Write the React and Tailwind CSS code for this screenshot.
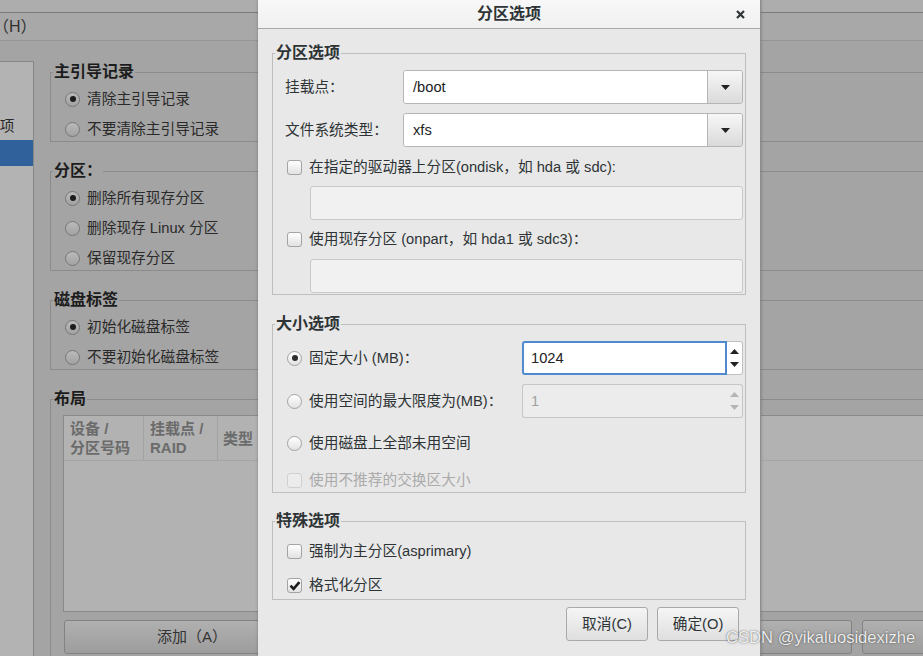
import React from "react";

const Radio = ({ checked, dim }) => (
  <span
    className={`flex h-[15px] w-[15px] shrink-0 items-center justify-center rounded-full border ${
      dim
        ? "border-[#777777] bg-linear-to-b from-[#bababa] to-[#a2a2a2]"
        : "border-[#a3a3a3] bg-linear-to-b from-white to-[#e2e2e2]"
    }`}
  >
    {checked && (
      <span className={`h-[6px] w-[6px] rounded-full ${dim ? "bg-[#1c1c1c]" : "bg-[#2e2e2e]"}`} />
    )}
  </span>
);

const Check = ({ checked, disabled }) => (
  <span
    className={`flex h-[15px] w-[15px] shrink-0 items-center justify-center rounded-[3px] border ${
      disabled
        ? "border-[#d0d0d0] bg-[#ececec]"
        : "border-[#a3a3a3] bg-linear-to-b from-white to-[#e2e2e2]"
    }`}
  >
    {checked && (
      <svg width="12" height="11" viewBox="0 0 12 11">
        <path d="M1.5 5.6 L4.6 8.8 L10.4 2.2" fill="none" stroke="#1a1a1a" strokeWidth="2.6" />
      </svg>
    )}
  </span>
);

const Arrow = ({ up, color = "#222" }) => (
  <svg width="9" height="5" viewBox="0 0 9 5">
    <path d={up ? "M0 5H9L4.5 0Z" : "M0 0H9L4.5 5Z"} fill={color} />
  </svg>
);

const Combo = ({ value }) => (
  <div className="flex h-[34px] w-[340px] overflow-hidden rounded-[3px] border border-[#b5b5b5]">
    <div className="flex flex-1 items-center bg-white pl-[9px] text-[#222]">{value}</div>
    <div className="flex w-[35px] items-center justify-center border-l border-[#b5b5b5] bg-linear-to-b from-[#f7f7f7] to-[#dadada]">
      <Arrow />
    </div>
  </div>
);

const Entry = () => (
  <div className="ml-[37px] mr-[2px] h-[34px] rounded-[3px] border border-[#c9c9c9] bg-[#f1f1f1]" />
);

const Spin = ({ value, focused }) => (
  <div className="flex h-[34px] w-[221px]">
    <div
      className={`flex flex-1 items-center rounded-l-[3px] ${
        focused
          ? "border-2 border-[#5089cf] bg-white pl-[7px] text-[#222]"
          : "border border-r-0 border-[#c6c6c6] bg-[#ececec] pl-[8px] text-[#a0a0a0]"
      }`}
    >
      {value}
    </div>
    <div
      className={`flex w-[16px] flex-col items-center justify-around rounded-r-[3px] border border-l-0 border-[#c0c0c0] py-[3px] ${
        focused ? "bg-white" : "border-l border-[#c6c6c6] bg-[#ececec]"
      }`}
    >
      <Arrow up color={focused ? "#222" : "#b5b5b5"} />
      <Arrow color={focused ? "#222" : "#b5b5b5"} />
    </div>
  </div>
);

const DlgOpt = ({ control, children, muted }) => (
  <div className={`flex h-[20px] items-center gap-[7px] pl-[14px] ${muted ? "text-[#ababab]" : "text-[#2e3436]"}`}>
    {control}
    <span className="whitespace-nowrap">{children}</span>
  </div>
);

const BgOpt = ({ checked, children }) => (
  <div className="flex h-[20px] items-center gap-[7px] pl-[14px] text-[#2a2a2a]">
    <Radio checked={checked} dim />
    <span className="whitespace-nowrap">{children}</span>
  </div>
);

export default function App() {
  return (
    <div className="relative h-[656px] w-[923px] overflow-hidden bg-[#a4a4a4] font-['Liberation_Sans','Noto_Sans_CJK_SC',sans-serif] text-[14.7px] leading-[20px]">
      {/* underlying installer window (dimmed) */}
      <div className="h-[13px] border-b border-[#7c7c7c] bg-[#adadad]" />
      <div className="flex h-[28px] items-center border-b border-[#959595] bg-[#a8a8a8] text-[#303030]">
        <span className="ml-[-7px] text-[16px]">（H）</span>
      </div>

      <div className="flex">
        {/* sidebar */}
        <div className="mt-[20px] h-[600px] w-[34px] shrink-0 border-t border-r border-[#878787] bg-[#b3b3b3]">
          <div className="h-[51px]" />
          <div className="flex h-[26px] items-center text-[#2a2a2a]">
            <span className="ml-[-15px] whitespace-nowrap">选项</span>
          </div>
          <div className="mt-[1px] h-[26px] bg-[#31619a]" />
        </div>

        {/* content */}
        <div className="ml-[16px] w-[1000px] shrink-0 pt-[21px]">
          <fieldset className="border border-[#8b8b8b] pb-[2px]">
            <legend className="ml-[2px] px-px text-[16px] font-bold text-[#1c1c1c]">主引导记录</legend>
            <div className="flex flex-col gap-[10px] pt-[7px]">
              <BgOpt checked>清除主引导记录</BgOpt>
              <BgOpt>不要清除主引导记录</BgOpt>
            </div>
          </fieldset>

          <fieldset className="mt-[19px] border border-[#8b8b8b] pb-[2px]">
            <legend className="ml-[2px] px-px text-[16px] font-bold text-[#1c1c1c]">分区：</legend>
            <div className="flex flex-col gap-[10px] pt-[7px]">
              <BgOpt checked>删除所有现存分区</BgOpt>
              <BgOpt>删除现存 Linux 分区</BgOpt>
              <BgOpt>保留现存分区</BgOpt>
            </div>
          </fieldset>

          <fieldset className="mt-[19px] border border-[#8b8b8b] pb-[2px]">
            <legend className="ml-[2px] px-px text-[16px] font-bold text-[#1c1c1c]">磁盘标签</legend>
            <div className="flex flex-col gap-[10px] pt-[7px]">
              <BgOpt checked>初始化磁盘标签</BgOpt>
              <BgOpt>不要初始化磁盘标签</BgOpt>
            </div>
          </fieldset>

          <fieldset className="mt-[19px] border border-[#8b8b8b] pb-[6px]">
            <legend className="ml-[2px] px-px text-[16px] font-bold text-[#1c1c1c]">布局</legend>
            <div className="pt-[6px] pl-[12px]">
              <div className="h-[197px] border border-[#8a8a8a] bg-[#b2b2b2]">
                <div className="flex h-[45px] border-b border-[#a6a6a6] text-[15px] font-bold leading-[19px] text-[#6b6b6b]">
                  <div className="flex w-[80px] flex-col justify-center border-r border-[#a2a2a2] pl-[6px]">
                    <span>设备 /</span>
                    <span>分区号码</span>
                  </div>
                  <div className="flex w-[74px] flex-col justify-center border-r border-[#a2a2a2] pl-[6px]">
                    <span>挂载点 /</span>
                    <span>RAID</span>
                  </div>
                  <div className="flex w-[80px] items-center pl-[5px]">类型</div>
                </div>
              </div>
            </div>
            <div className="mt-[8px] flex gap-[10px] pl-[13px]">
              {["添加（A）", "编辑（E）", "删除（D）", "重设（S）"].map((t) => (
                <div
                  key={t}
                  className="flex h-[34px] w-[256px] items-center justify-center rounded-[3px] border border-[#828282] bg-linear-to-b from-[#b0b0b0] to-[#9d9d9d] text-[15px] text-[#333333]"
                >
                  {t}
                </div>
              ))}
            </div>
          </fieldset>
        </div>
      </div>

      {/* dialog window */}
      <div className="absolute left-[258px] top-0 h-[660px] w-[503px] border-r border-[#8d8d8d] bg-[#e8e8e8] shadow-[0_0_3px_rgba(0,0,0,0.25)]">
        <div className="relative flex h-[29px] items-center justify-center border-b border-[#a8a8a8] bg-linear-to-b from-[#f8f8f8] to-[#f0f0f0]">
          <span className="text-[16px] font-bold text-[#2e3436]">分区选项</span>
          <svg className="absolute right-[15px] top-[10px]" width="9" height="9" viewBox="0 0 9 9">
            <path d="M1 1L8 8M8 1L1 8" stroke="#2e3436" strokeWidth="2.2" />
          </svg>
        </div>

        <div className="px-[14px] pt-[14px]">
          {/* 分区选项 */}
          <fieldset className="border border-[#bebebe] pb-[1px]">
            <legend className="ml-[2px] px-px text-[16px] font-bold text-[#2e3436]">分区选项</legend>
            <div className="flex flex-col pt-[7px] text-[#2e3436]">
              <div className="flex items-center pl-[12px]">
                <span className="w-[118px]">挂载点：</span>
                <Combo value="/boot" />
              </div>
              <div className="mt-[9px] flex items-center pl-[12px]">
                <span className="w-[118px]">文件系统类型：</span>
                <Combo value="xfs" />
              </div>
              <div className="mt-[10px]">
                <DlgOpt control={<Check />}>在指定的驱动器上分区(ondisk，如 hda 或 sdc):</DlgOpt>
              </div>
              <div className="mt-[9px]">
                <Entry />
              </div>
              <div className="mt-[9px]">
                <DlgOpt control={<Check />}>使用现存分区 (onpart，如 hda1 或 sdc3)：</DlgOpt>
              </div>
              <div className="mt-[10px]">
                <Entry />
              </div>
            </div>
          </fieldset>

          {/* 大小选项 */}
          <fieldset className="mt-[19px] border border-[#bebebe] pb-[2px]">
            <legend className="ml-[2px] px-px text-[16px] font-bold text-[#2e3436]">大小选项</legend>
            <div className="flex flex-col pt-[7px] text-[#2e3436]">
              <div className="flex h-[34px] items-center pl-[14px]">
                <div className="flex w-[235px] items-center gap-[7px]">
                  <Radio checked />
                  <span className="whitespace-nowrap">固定大小 (MB)：</span>
                </div>
                <Spin value="1024" focused />
              </div>
              <div className="mt-[9px] flex h-[34px] items-center pl-[14px]">
                <div className="flex w-[235px] items-center gap-[7px]">
                  <Radio />
                  <span className="whitespace-nowrap">使用空间的最大限度为(MB)：</span>
                </div>
                <Spin value="1" />
              </div>
              <div className="mt-[15px]">
                <DlgOpt control={<Radio />}>使用磁盘上全部未用空间</DlgOpt>
              </div>
              <div className="mt-[17px]">
                <DlgOpt control={<Check disabled />} muted>
                  使用不推荐的交换区大小
                </DlgOpt>
              </div>
            </div>
          </fieldset>

          {/* 特殊选项 */}
          <fieldset className="mt-[18px] border border-[#bebebe] pb-[4px]">
            <legend className="ml-[2px] px-px text-[16px] font-bold text-[#2e3436]">特殊选项</legend>
            <div className="flex flex-col gap-[14px] pt-[10px]">
              <DlgOpt control={<Check />}>强制为主分区(asprimary)</DlgOpt>
              <DlgOpt control={<Check checked />}>格式化分区</DlgOpt>
            </div>
          </fieldset>

          <div className="mt-[7px] flex justify-end gap-[9px] pr-[7px]">
            {["取消(C)", "确定(O)"].map((t) => (
              <div
                key={t}
                className="flex h-[34px] w-[82px] items-center justify-center rounded-[3px] border border-[#a9a9a9] bg-linear-to-b from-[#f5f5f5] to-[#dfdfdf] text-[#2e3436]"
              >
                {t}
              </div>
            ))}
          </div>
        </div>
      </div>

      {/* watermark */}
      <div className="absolute left-[726px] top-[628px] whitespace-nowrap text-[16.6px] text-white/90 [text-shadow:0_0_1px_rgba(0,0,0,0.55),0_0_3px_rgba(0,0,0,0.3)]">
        CSDN @yikaluosidexizhe
      </div>
    </div>
  );
}
